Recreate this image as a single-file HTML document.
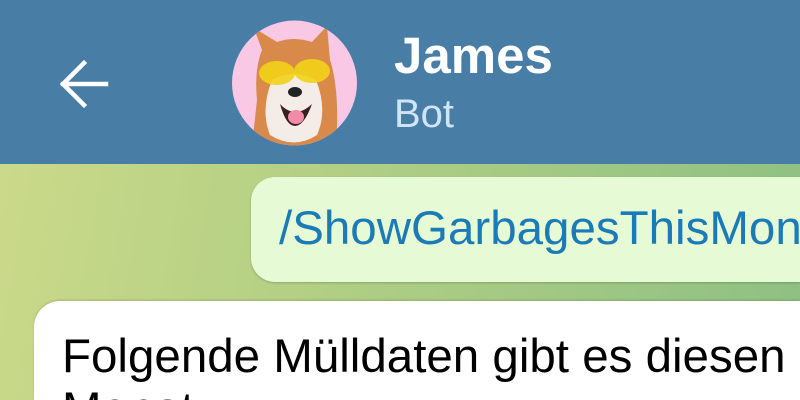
<!DOCTYPE html>
<html><head><meta charset="utf-8"><style>
html,body{margin:0;padding:0;width:800px;height:400px;overflow:hidden;font-family:"Liberation Sans",sans-serif;position:relative}
.hdr{position:absolute;left:0;top:0;width:800px;height:164px;background:#487ea6}
.bg{position:absolute;left:0;top:164px;width:800px;height:236px;background:linear-gradient(100deg,#cbd98a 0%,#b2cf84 40%,#8ec083 100%)}
.name{position:absolute;left:394px;top:28px;font-size:51px;font-weight:bold;color:#fff;line-height:56px}
.st{position:absolute;left:394px;top:92px;font-size:40px;color:#cfe4f7;line-height:44px}
.b1{position:absolute;left:251px;top:177px;width:549px;height:105px;background:#e6fad6;border-radius:24px 0 0 24px;box-shadow:0 1px 2px rgba(0,0,0,.2)}
.c{position:absolute;left:279px;top:204px;width:521px;overflow:hidden;font-size:47.5px;color:#1b7bb6;line-height:50px;white-space:nowrap}
.b2{position:absolute;left:34px;top:301px;width:766px;height:99px;background:#fff;border-radius:26px 0 0 0;box-shadow:0 -1px 2px rgba(0,0,0,.15)}
.t{position:absolute;left:62px;top:330px;width:738px;height:70px;overflow:hidden;font-size:47.5px;color:#000;line-height:53px;white-space:nowrap}
</style></head><body>
<div class="hdr"></div>
<svg style="position:absolute;left:56px;top:56px" width="56" height="56" viewBox="0 0 56 56"><path d="M7 28H50M28 7L7 28L28 49" stroke="#fff" stroke-width="4.5" fill="none" stroke-linecap="square"/></svg>
<svg style="position:absolute;left:232px;top:20px" width="125" height="126" viewBox="0 0 125 126">
<defs><clipPath id="cp"><circle cx="62.5" cy="63" r="62.5"/></clipPath></defs>
<g clip-path="url(#cp)">
<rect width="125" height="126" fill="#f8c8e4"/>
<path d="M20 126 L25 80 Q22 50 30 30 L22 8 L45 22 Q62 16 80 22 L95 6 L98 40 Q108 70 104 126Z" fill="#d98a4a"/>
<path d="M40 60 Q62 48 84 60 Q96 90 85 115 Q62 130 38 115 Q28 90 40 60Z" fill="#f4ece6"/>
<ellipse cx="45" cy="53" rx="18" ry="12" fill="#f2d21a" opacity=".9"/>
<ellipse cx="80" cy="51" rx="18" ry="12" fill="#f2d21a" opacity=".9"/>
<ellipse cx="63" cy="72" rx="7" ry="5" fill="#222"/>
<path d="M48 84 Q63 100 80 84 Q72 106 63 106 Q54 106 48 84Z" fill="#3a2020"/>
<ellipse cx="64" cy="97" rx="8" ry="7" fill="#f28aa8"/>
</g></svg>
<div class="name">James</div>
<div class="st">Bot</div>
<div class="bg"></div>
<div class="b1"></div>
<div class="c">/ShowGarbagesThisMonth</div>
<div class="b2"></div>
<div class="t">Folgende Mülldaten gibt es diesen<br>Monat:</div>
</body></html>
